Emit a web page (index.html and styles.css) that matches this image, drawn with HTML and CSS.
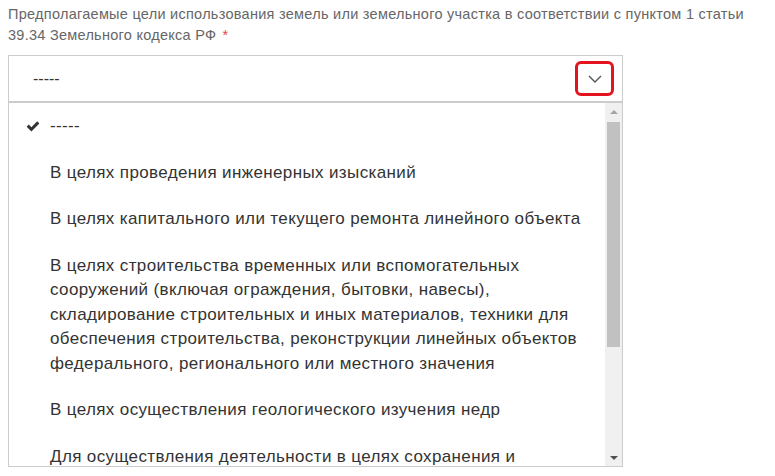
FILE: index.html
```html
<!DOCTYPE html>
<html lang="ru">
<head>
    <meta charset="UTF-8">
    <title>Цели использования земель</title>
    <link rel="stylesheet" href="styles.css">
</head>
<body>
    <div class="field">
        <label class="field-label">Предполагаемые цели использования земель или земельного участка в соответствии с пунктом 1 статьи 39.34 Земельного кодекса РФ <span class="req">*</span></label>

        <div class="select">
            <span class="select-value">-----</span>
            <span class="select-toggle">
                <svg width="14" height="8" viewBox="0 0 14 8"><path d="M1 1 L7 7 L13 1" fill="none" stroke="#555" stroke-width="1.4"/></svg>
            </span>
        </div>

        <!-- выпадающий список -->
        <div class="dropdown">
            <ul class="options">
                <li class="option selected">
                    <span class="mark">
                        <svg width="14" height="11" viewBox="0 0 13 10"><path d="M0.6 5.2 L2.6 3.2 L5 5.6 L10.4 0.2 L12.4 2.2 L5 9.6 Z" fill="#333"/></svg>
                    </span>
                    <span class="text">-----</span>
                </li>
                <li class="option"><span class="mark"></span><span class="text">В целях проведения инженерных изысканий</span></li>
                <li class="option"><span class="mark"></span><span class="text">В целях капитального или текущего ремонта линейного объекта</span></li>
                <li class="option"><span class="mark"></span><span class="text">В целях строительства временных или вспомогательных сооружений (включая ограждения, бытовки, навесы), складирование строительных и иных материалов, техники для обеспечения строительства, реконструкции линейных объектов федерального, регионального или местного значения</span></li>
                <li class="option"><span class="mark"></span><span class="text">В целях осуществления геологического изучения недр</span></li>
                <li class="option"><span class="mark"></span><span class="text">Для осуществления деятельности в целях сохранения и восстановления объектов</span></li>
            </ul>
            <div class="scrollbar">
                <div class="sb-btn"><span class="arrow-up"></span></div>
                <div class="sb-track"><div class="sb-thumb"></div></div>
                <div class="sb-btn"><span class="arrow-down"></span></div>
            </div>
        </div>
    </div>
</body>
</html>
```

FILE: styles.css
```css
body {
    margin: 0;
    padding: 4px 0 0 8px;
    font-family: "Liberation Sans", Arial, sans-serif;
    background-color: #fff;
}
.field-label {
    display: block;
    font-size: 14.5px;
    letter-spacing: 0.27px;
    line-height: 21px;
    color: #666;
}
.req {
    color: #e2474b;
    margin-left: 2px;
}
.select {
    height: 45px;
    margin-top: 9px;
    border: 1px solid #ccc;
    display: flex;
    align-items: center;
    justify-content: space-between;
    padding: 0 8px 0 24px;
    box-sizing: content-box;
    width: 581px;
    font-size: 16px;
    color: #333;
}
.select-toggle {
    width: 33px;
    height: 29px;
    border: 3px solid #e3141f;
    border-radius: 6px;
    display: flex;
    align-items: center;
    justify-content: center;
}
.dropdown {
    width: 613px;
    height: 363px;
    border: 1px solid #ccc;
    display: flex;
    overflow: hidden;
}
.options {
    list-style: none;
    margin: 0;
    padding: 0;
    flex: 1;
}
.option {
    display: flex;
    padding: 11px 20px 11px 17px;
    font-size: 17px;
    letter-spacing: 0.37px;
    line-height: 24.5px;
    color: #333;
}
.mark {
    width: 24px;
    flex: none;
    display: flex;
    align-items: center;
}
.text {
    flex: 1;
}
.scrollbar {
    width: 17px;
    flex: none;
    background-color: #f0f0f0;
    display: flex;
    flex-direction: column;
}
.sb-btn {
    height: 17px;
    display: flex;
    align-items: center;
    justify-content: center;
}
.sb-track {
    flex: 1;
    padding: 2px;
}
.sb-thumb {
    height: 225px;
    background-color: #c1c1c1;
}
.arrow-up {
    width: 0;
    height: 0;
    border-left: 4px solid transparent;
    border-right: 4px solid transparent;
    border-bottom: 4px solid #a3a3a3;
}
.arrow-down {
    width: 0;
    height: 0;
    border-left: 4px solid transparent;
    border-right: 4px solid transparent;
    border-top: 4px solid #505050;
}
```
